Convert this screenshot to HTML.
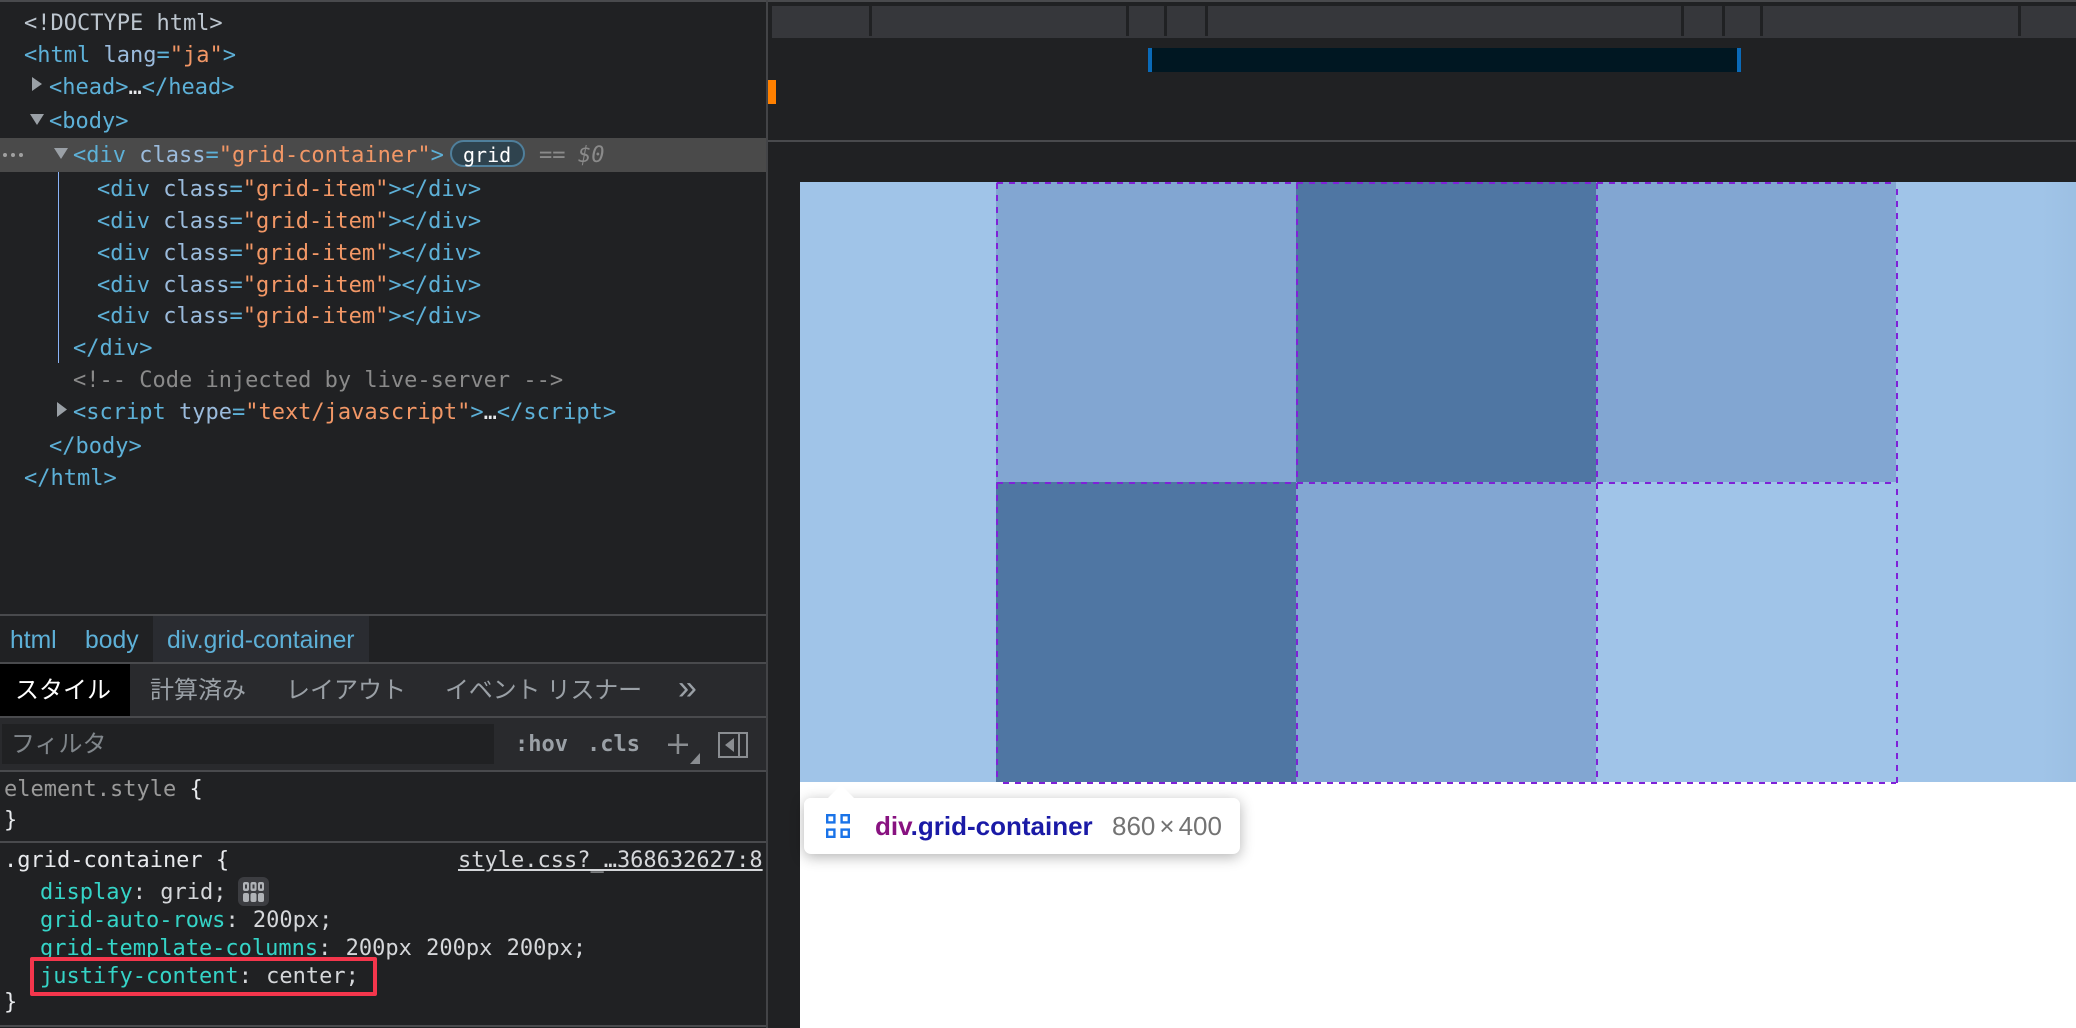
<!DOCTYPE html>
<html lang="ja">
<head>
<meta charset="utf-8">
<title>DevTools</title>
<style>
html,body{margin:0;padding:0;width:2076px;height:1028px;overflow:hidden;background:#202123}
*{box-sizing:border-box}
.b{position:absolute}
.r{position:absolute;white-space:pre;height:32px;line-height:32px;font:22px/32px "DejaVu Sans Mono","Liberation Mono",monospace;color:#bdc6cf}
.t{color:#5db0d7}.a{color:#9bbbdc}.v{color:#f29766}.c{color:#8a8a8a}.w{color:#e8eaed}
.p{color:#35d4c7}.q{color:#d5d7da;word-spacing:1px}
.s{position:absolute;white-space:pre;font-family:"Liberation Sans","Noto Sans CJK JP",sans-serif;font-size:24px;line-height:32px;height:32px}
.line{position:absolute;background:#494a4d}
</style>
</head>
<body>
<div class="b" style="left:0;top:0;width:2076px;height:2px;background:#494a4d"></div>

<!-- DOM tree -->
<div class="b" style="left:0;top:138px;width:766px;height:34px;background:#4a4a4a"></div>
<div class="b" style="left:58px;top:172px;width:1px;height:191px;background:#8ab4f8"></div>

<svg class="b" style="left:0;top:0" width="120" height="430">
<g fill="#9aa0a6">
<path d="M32 77L42 84L32 91Z"/>
<path d="M30 114H44L37 125Z"/>
<path d="M54 148H68L61 159Z"/>
<path d="M57 402L67 409.500L57 417Z"/>
</g>
<g fill="#a0a0a0">
<circle cx="5" cy="155" r="2"/><circle cx="13" cy="155" r="2"/><circle cx="21" cy="155" r="2"/>
</g>
</svg>

<div class="r" style="left:24px;top:8px">&lt;!DOCTYPE html&gt;</div>
<div class="r" style="left:24px;top:40px"><span class="t">&lt;html</span> <span class="a">lang</span><span class="t">=</span><span class="v">"ja"</span><span class="t">&gt;</span></div>
<div class="r" style="left:49px;top:72px"><span class="t">&lt;head&gt;</span><span class="w">…</span><span class="t">&lt;/head&gt;</span></div>
<div class="r" style="left:49px;top:106px"><span class="t">&lt;body&gt;</span></div>
<div class="r" style="left:73px;top:140px"><span class="t">&lt;div</span> <span class="a">class</span><span class="t">=</span><span class="v">"grid-container"</span><span class="t">&gt;</span></div>
<div class="b" style="left:450px;top:140px;width:75px;height:27px;border:2px solid #4f7f9b;border-radius:14px;background:#2f434e"></div>
<div class="r" style="left:463px;top:138px;color:#fff;font-size:20px;line-height:34px">grid</div>
<div class="r c" style="left:539px;top:140px">==</div>
<div class="r c" style="left:578px;top:140px;font-style:italic">$0</div>
<div class="r" style="left:97px;top:174px"><span class="t">&lt;div</span> <span class="a">class</span><span class="t">=</span><span class="v">"grid-item"</span><span class="t">&gt;&lt;/div&gt;</span></div>
<div class="r" style="left:97px;top:206px"><span class="t">&lt;div</span> <span class="a">class</span><span class="t">=</span><span class="v">"grid-item"</span><span class="t">&gt;&lt;/div&gt;</span></div>
<div class="r" style="left:97px;top:238px"><span class="t">&lt;div</span> <span class="a">class</span><span class="t">=</span><span class="v">"grid-item"</span><span class="t">&gt;&lt;/div&gt;</span></div>
<div class="r" style="left:97px;top:270px"><span class="t">&lt;div</span> <span class="a">class</span><span class="t">=</span><span class="v">"grid-item"</span><span class="t">&gt;&lt;/div&gt;</span></div>
<div class="r" style="left:97px;top:301px"><span class="t">&lt;div</span> <span class="a">class</span><span class="t">=</span><span class="v">"grid-item"</span><span class="t">&gt;&lt;/div&gt;</span></div>
<div class="r" style="left:73px;top:333px"><span class="t">&lt;/div&gt;</span></div>
<div class="r c" style="left:73px;top:365px">&lt;!-- Code injected by live-server --&gt;</div>
<div class="r" style="left:73px;top:397px"><span class="t">&lt;script</span> <span class="a">type</span><span class="t">=</span><span class="v">"text/javascript"</span><span class="t">&gt;</span><span class="w">…</span><span class="t">&lt;/script&gt;</span></div>
<div class="r" style="left:49px;top:431px"><span class="t">&lt;/body&gt;</span></div>
<div class="r" style="left:24px;top:463px"><span class="t">&lt;/html&gt;</span></div>

<!-- Breadcrumbs -->
<div class="line" style="left:0;top:614px;width:766px;height:2px"></div>
<div class="b" style="left:153px;top:616px;width:216px;height:46px;background:#2a2c31"></div>
<div class="s" style="left:10px;top:625px;color:#5db0d7;font-size:24.700px">html</div>
<div class="s" style="left:85px;top:625px;color:#5db0d7;font-size:24.700px">body</div>
<div class="s" style="left:167px;top:625px;color:#5db0d7;font-size:24.700px">div.grid-container</div>
<div class="line" style="left:0;top:662px;width:766px;height:2px"></div>

<!-- Tabs -->
<div class="b" style="left:0;top:664px;width:766px;height:52px;background:#292a2d"></div>
<div class="b" style="left:0;top:664px;width:130px;height:52px;background:#000"></div>
<div class="s" style="left:15px;top:675px;color:#fff">スタイル</div>
<div class="s" style="left:150px;top:675px;color:#9aa0a6">計算済み</div>
<div class="s" style="left:286px;top:675px;color:#9aa0a6">レイアウト</div>
<div class="s" style="left:445px;top:675px;color:#9aa0a6;letter-spacing:-.2px">イベント リスナー</div>
<div class="s" style="left:678px;top:672px;color:#9aa0a6;font-size:34px">»</div>
<div class="line" style="left:0;top:716px;width:766px;height:2px"></div>

<!-- Filter -->
<div class="b" style="left:0;top:718px;width:766px;height:52px;background:#292a2d"></div>
<div class="b" style="left:2px;top:724px;width:492px;height:40px;background:#202123"></div>
<div class="s" style="left:11px;top:729px;color:#80868b">フィルタ</div>
<div class="r" style="left:515px;top:729px;color:#9aa0a6;font-weight:bold">:hov</div>
<div class="r" style="left:587px;top:729px;color:#9aa0a6;font-weight:bold">.cls</div>
<svg class="b" style="left:660px;top:725px" width="100" height="42">
<g fill="#8a8d91">
<rect x="8" y="18.500" width="20" height="2.500"/>
<rect x="16.700" y="9" width="2.500" height="20"/>
<path d="M30 39L40 28V39Z"/>
</g>
<g fill="none" stroke="#8a8d91" stroke-width="2">
<rect x="59" y="8" width="28" height="24"/>
<path d="M79 8V32"/>
</g>
<path d="M65 20L74 13V27Z" fill="#8a8d91"/>
</svg>
<div class="line" style="left:0;top:770px;width:766px;height:2px"></div>

<!-- Styles -->
<div class="r c" style="left:4px;top:774px;color:#9a9a9a">element.style <span class="w">{</span></div>
<div class="r w" style="left:4px;top:805px">}</div>
<div class="line" style="left:0;top:841px;width:766px;height:2px"></div>
<div class="r w" style="left:4px;top:845px">.grid-container {</div>
<div class="r" style="left:458px;top:845px;color:#d5d7da;text-decoration:underline">style.css?_…368632627:8</div>
<div class="r" style="left:40px;top:877px"><span class="p">display</span><span class="q">: grid;</span></div>
<div class="b" style="left:238px;top:877px;width:31px;height:29px;border-radius:6px;background:#3c3d41"></div>
<svg class="b" style="left:238px;top:877px" width="31" height="29">
<g fill="#b0b3b7">
<rect x="5" y="5" width="6" height="9" rx="2"/><rect x="12.500" y="5" width="6" height="9" rx="2"/><rect x="20" y="5" width="6" height="9" rx="2"/>
<rect x="5" y="16" width="6" height="9" rx="2"/><rect x="12.500" y="16" width="6" height="9" rx="2"/><rect x="20" y="16" width="6" height="9" rx="2"/>
</g>
<g fill="#3c3d41">
<rect x="7" y="7.500" width="2" height="4"/><rect x="14.500" y="7.500" width="2" height="4"/><rect x="22" y="7.500" width="2" height="4"/>
</g>
</svg>
<div class="r" style="left:40px;top:905px"><span class="p">grid-auto-rows</span><span class="q">: 200px;</span></div>
<div class="r" style="left:40px;top:933px"><span class="p">grid-template-columns</span><span class="q">: 200px 200px 200px;</span></div>
<div class="r" style="left:40px;top:961px"><span class="p">justify-content</span><span class="q">: center;</span></div>
<div class="b" style="left:30px;top:957px;width:347px;height:39px;border:4px solid #f4364c;border-radius:2px"></div>
<div class="r w" style="left:4px;top:987px">}</div>
<div class="line" style="left:0;top:1025px;width:766px;height:2px"></div>

<!-- Vertical divider -->
<div class="b" style="left:766px;top:0;width:2px;height:1028px;background:#434447"></div>

<!-- Top track -->
<div class="b" style="left:772px;top:6px;width:1304px;height:32px;background:#36373b"></div>
<div class="b" style="left:869px;top:6px;width:3px;height:30px;background:#202123"></div>
<div class="b" style="left:1126px;top:6px;width:3px;height:30px;background:#202123"></div>
<div class="b" style="left:1164px;top:6px;width:3px;height:30px;background:#202123"></div>
<div class="b" style="left:1205px;top:6px;width:3px;height:30px;background:#202123"></div>
<div class="b" style="left:1681px;top:6px;width:3px;height:30px;background:#202123"></div>
<div class="b" style="left:1722px;top:6px;width:3px;height:30px;background:#202123"></div>
<div class="b" style="left:1760px;top:6px;width:3px;height:30px;background:#202123"></div>
<div class="b" style="left:2018px;top:6px;width:3px;height:30px;background:#202123"></div>

<div class="b" style="left:1148px;top:48px;width:593px;height:24px;background:#001722;border-left:4px solid #0a6ab8;border-right:4px solid #0a6ab8"></div>
<div class="b" style="left:768px;top:80px;width:8px;height:24px;background:#ff8000"></div>
<div class="line" style="left:768px;top:140px;width:1308px;height:2px"></div>

<!-- Viewport -->
<div class="b" style="left:800px;top:182px;width:1276px;height:846px;background:#fff"></div>
<div class="b" style="left:800px;top:182px;width:1276px;height:600px;background:#a0c4e8"></div>
<div class="b" style="left:996px;top:182px;width:300px;height:300px;background:#82a6d2"></div>
<div class="b" style="left:1296px;top:182px;width:300px;height:300px;background:#4f76a3"></div>
<div class="b" style="left:1596px;top:182px;width:300px;height:300px;background:#82a6d2"></div>
<div class="b" style="left:996px;top:482px;width:300px;height:300px;background:#4f76a3"></div>
<div class="b" style="left:1296px;top:482px;width:300px;height:300px;background:#82a6d2"></div>
<div class="b" style="left:2040px;top:182px;width:36px;height:600px;background:linear-gradient(90deg,rgba(0,0,0,0),rgba(0,0,0,.025))"></div>

<svg class="b" style="left:0;top:0" width="2076" height="1028">
<g stroke="#7f22d8" stroke-width="2" fill="none" stroke-dasharray="6 6">
<path d="M997 183H1896"/>
<path d="M1297 483H1896"/>
<path d="M1003 783H1896"/>
<path d="M997 483H1296"/>
<path d="M997 183V782"/>
<path d="M1297 183V782"/>
<path d="M1597 183V782"/>
<path d="M1897 189V784"/>
</g>
</svg>

<!-- Tooltip -->
<div class="b" style="left:804px;top:798px;width:436px;height:56px;background:#fff;border-radius:7px;box-shadow:0 3px 14px rgba(0,0,0,.3)"></div>
<svg class="b" style="left:820px;top:784px" width="44" height="16">
<path d="M7 15L21 1L35 15Z" fill="#fff"/>
</svg>
<div class="b" style="left:804px;top:798px;width:436px;height:12px;background:#fff;border-radius:7px 7px 0 0"></div>
<svg class="b" style="left:826px;top:814px" width="24" height="24">
<g fill="none" stroke="#1a73e8" stroke-width="2.400">
<rect x="1.200" y="1.200" width="7.200" height="7.200"/>
<rect x="15.600" y="1.200" width="7.200" height="7.200"/>
<rect x="1.200" y="15.600" width="7.200" height="7.200"/>
<rect x="15.600" y="15.600" width="7.200" height="7.200"/>
</g>
</svg>
<div class="s" style="left:875px;top:810px;font-size:26px;font-weight:bold;color:#1a1aa6"><span style="color:#881280">div</span>.grid-container</div>
<div class="s" style="left:1112px;top:810px;font-size:26px;color:#737373">860<span style="margin:0 4px">×</span>400</div>
</body>
</html>
